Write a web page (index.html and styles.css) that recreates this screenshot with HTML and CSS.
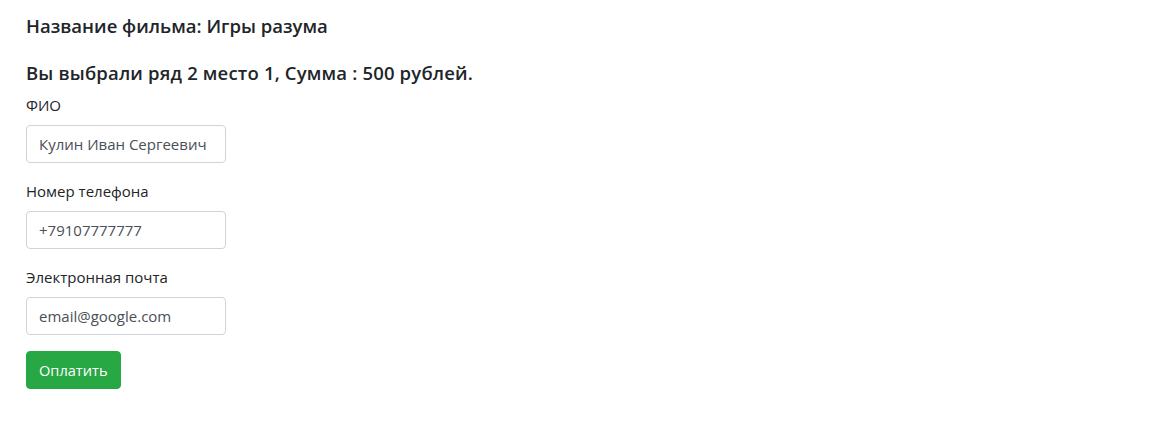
FILE: index.html
```html
<!DOCTYPE html>
<html lang="ru">
<head>
<meta charset="utf-8">
<link rel="stylesheet" href="styles.css">
</head>
<body>
<div class="container">
  <h5 class="title">Название фильма: Игры разума</h5>
  <h5 class="summary">Вы выбрали ряд 2 место 1, Сумма : 500 рублей.</h5>
  <form class="form">
    <div class="form-group">
      <label class="label">ФИО</label>
      <input class="input" type="text" value="Кулин Иван Сергеевич">
    </div>
    <div class="form-group">
      <label class="label">Номер телефона</label>
      <input class="input" type="text" value="+79107777777">
    </div>
    <div class="form-group">
      <label class="label">Электронная почта</label>
      <input class="input" type="text" value="email@google.com">
    </div>
    <button class="btn" type="button">Оплатить</button>
  </form>
</div>
</body>
</html>
```

FILE: styles.css
```css
html, body {
  margin: 0;
  padding: 0;
  background: #fff;
}
body {
  font-family: "Open Sans", "Noto Sans", sans-serif;
  font-size: 15px;
  line-height: 24px;
  color: #212529;
}
.container {
  padding: 15px 26px 0;
}
.title, .summary {
  margin: 0;
  font-size: 18.5px;
  font-weight: 600;
  line-height: 22px;
}
.title {
  margin-bottom: 25px;
}
.summary {
  margin-bottom: 9px;
  letter-spacing: 0.17px;
}
.form {
  display: flex;
  flex-direction: column;
  align-items: flex-start;
}
.form-group {
  display: flex;
  flex-direction: column;
  align-items: flex-start;
  margin-bottom: 16px;
}
.label {
  margin-bottom: 8px;
}
.input {
  box-sizing: border-box;
  width: 200px;
  height: 38px;
  padding: 6px 12px;
  font-family: inherit;
  font-size: 15px;
  color: #495057;
  border: 1px solid #ced4da;
  border-radius: 4px;
  background: #fff;
}
.btn {
  box-sizing: border-box;
  height: 38px;
  padding: 6px 12px;
  font-family: inherit;
  font-size: 14.6px;
  color: #fff;
  background: #28a745;
  border: 1px solid #28a745;
  border-radius: 4px;
}
```
